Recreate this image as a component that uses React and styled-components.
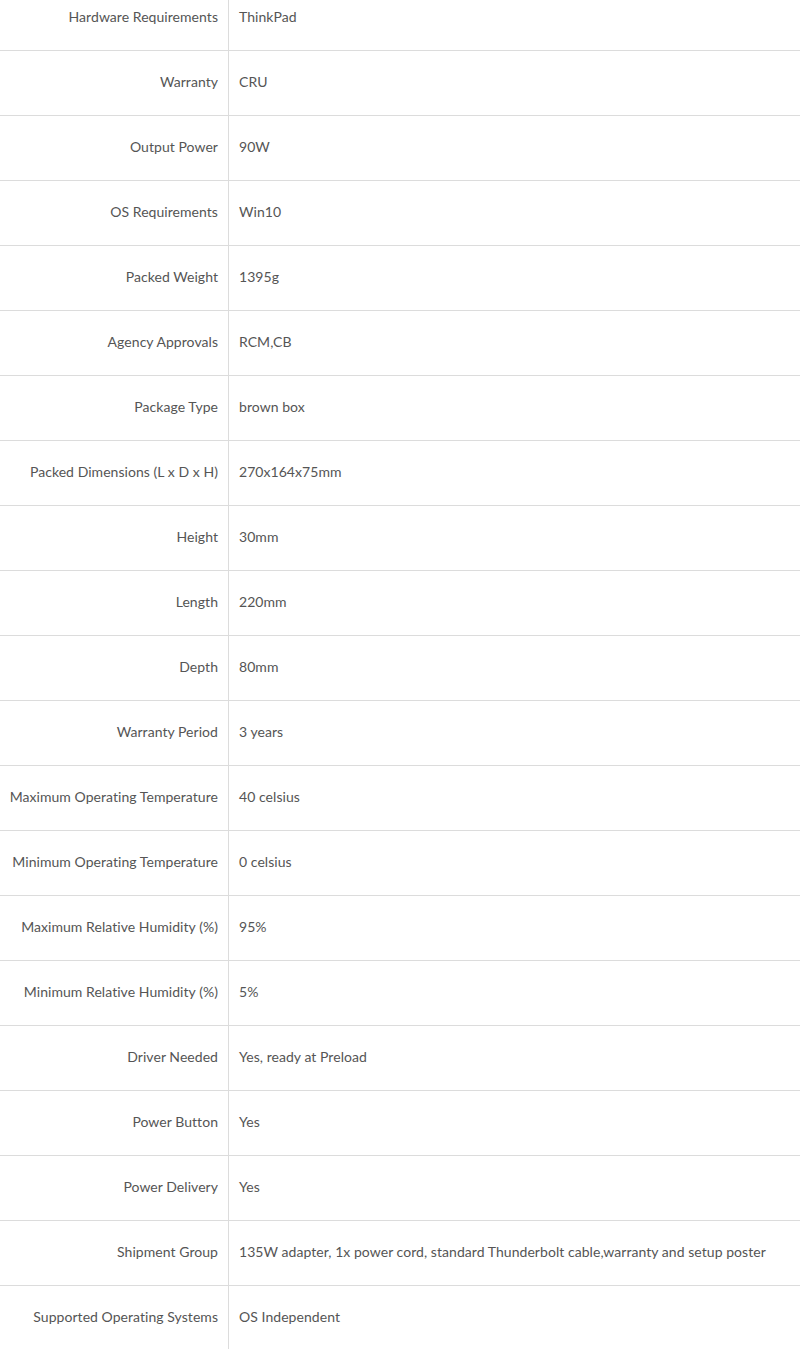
import React from 'react';
import styled, { createGlobalStyle } from 'styled-components';

const GlobalStyle = createGlobalStyle`
  html, body {
    margin: 0;
    padding: 0;
    background: #fff;
  }
  body {
    font-family: 'Lato', 'Liberation Sans', sans-serif;
    overflow: hidden;
  }
`;

const SpecTable = styled.div`
  margin-top: -14px;
  width: 800px;
  display: flex;
  flex-direction: column;
`;

const Row = styled.div`
  display: grid;
  grid-template-columns: 229px 1fr;
  height: 65px;
  border-bottom: 1px solid #dcdcdc;
  box-sizing: border-box;
`;

const Cell = styled.div`
  display: flex;
  align-items: center;
  padding-bottom: 4px;
  font-size: 14px;
  letter-spacing: 0.05px;
  color: #555555;
  white-space: nowrap;
`;

const Label = styled(Cell)`
  justify-content: flex-end;
  padding-right: 10px;
  border-right: 1px solid #dcdcdc;
`;

const Value = styled(Cell)`
  padding-left: 10px;
`;

const specs = [
  ['Hardware Requirements', 'ThinkPad'],
  ['Warranty', 'CRU'],
  ['Output Power', '90W'],
  ['OS Requirements', 'Win10'],
  ['Packed Weight', '1395g'],
  ['Agency Approvals', 'RCM,CB'],
  ['Package Type', 'brown box'],
  ['Packed Dimensions (L x D x H)', '270x164x75mm'],
  ['Height', '30mm'],
  ['Length', '220mm'],
  ['Depth', '80mm'],
  ['Warranty Period', '3 years'],
  ['Maximum Operating Temperature', '40 celsius'],
  ['Minimum Operating Temperature', '0 celsius'],
  ['Maximum Relative Humidity (%)', '95%'],
  ['Minimum Relative Humidity (%)', '5%'],
  ['Driver Needed', 'Yes, ready at Preload'],
  ['Power Button', 'Yes'],
  ['Power Delivery', 'Yes'],
  ['Shipment Group', '135W adapter, 1x power cord, standard Thunderbolt cable,warranty and setup poster'],
  ['Supported Operating Systems', 'OS Independent'],
];

export default function App() {
  return (
    <>
      <GlobalStyle />
      <SpecTable>
        {specs.map(([label, value]) => (
          <Row key={label}>
            <Label>{label}</Label>
            <Value>{value}</Value>
          </Row>
        ))}
      </SpecTable>
    </>
  );
}
